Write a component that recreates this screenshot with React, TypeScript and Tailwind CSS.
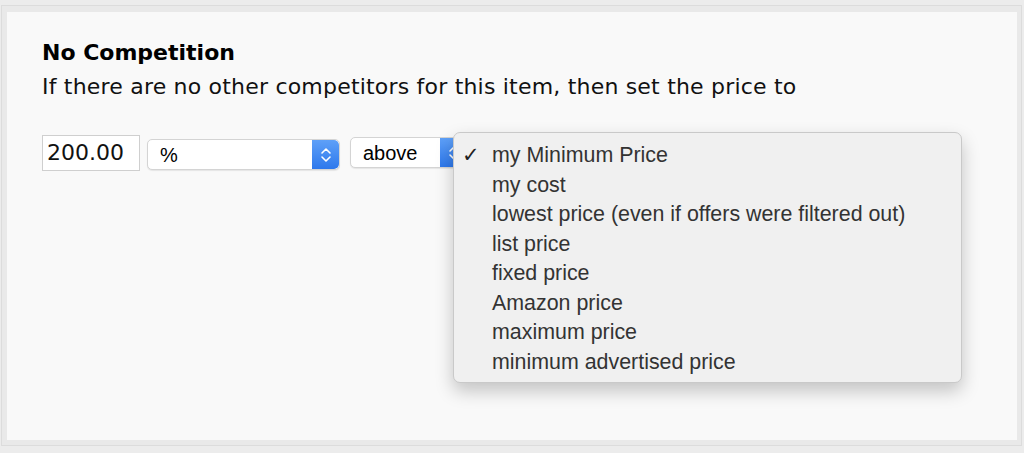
const options = [
  "my Minimum Price",
  "my cost",
  "lowest price (even if offers were filtered out)",
  "list price",
  "fixed price",
  "Amazon price",
  "maximum price",
  "minimum advertised price",
];

function Stepper() {
  return (
    <div className="flex h-full w-[27px] items-center justify-center rounded-r-[5px] bg-gradient-to-b from-[#5ea0f8] to-[#2d78ec]">
      <svg width="12" height="20" viewBox="0 0 12 20" fill="none">
        <path d="M2 8 L6 4 L10 8" stroke="white" strokeWidth="1.6" strokeLinecap="round" strokeLinejoin="round" />
        <path d="M2 12 L6 16 L10 12" stroke="white" strokeWidth="1.6" strokeLinecap="round" strokeLinejoin="round" />
      </svg>
    </div>
  );
}

export default function App() {
  return (
    <div className="h-[453px] w-[1024px] bg-[#ececec] pl-[1px] pr-[2px] pt-[5px] pb-[7px]">
      <div className="h-full border border-[#dcdcdc] bg-[#e9e9e9] pl-[5px] pr-[4px] pt-[6px] pb-[5px]">
        <div className="relative h-full bg-[#f9f9f9] pl-[35px] pt-[24px] font-['DejaVu_Sans',sans-serif] text-[22px] leading-[34px] text-[#111]">
          <div className="font-bold text-black">No Competition</div>
          <div className="tracking-[0.2px]">If there are no other competitors for this item, then set the price to</div>

          <div className="mt-[31px] flex items-start">
            <div className="flex h-[36px] w-[98px] items-center border border-[#cfcfcf] bg-white pl-[4px] text-[22px]">
              200.00
            </div>
            <div className="ml-[7px] mt-[4px] flex h-[31px] w-[193px] overflow-hidden rounded-[5px] border border-[#d4d4d4] bg-white shadow-[0_1px_1px_rgba(0,0,0,0.08)]">
              <div className="flex flex-1 items-center pl-[12px] font-['Liberation_Sans',sans-serif] text-[20px] text-black">%</div>
              <Stepper />
            </div>
            <div className="ml-[10px] mt-[2px] flex h-[31px] w-[118px] overflow-hidden rounded-[5px] border border-[#d4d4d4] bg-white shadow-[0_1px_1px_rgba(0,0,0,0.08)]">
              <div className="flex flex-1 items-center pl-[12px] font-['Liberation_Sans',sans-serif] text-[20px] text-black">above</div>
              <Stepper />
            </div>
          </div>

          <div className="absolute left-[446px] top-[120px] h-[251px] w-[509px] rounded-[7px] border border-[#c9c9c9] bg-[#f0f0f0] pt-[8px] font-['Liberation_Sans',sans-serif] text-[21.4px] text-[#333] shadow-[0_8px_18px_rgba(0,0,0,0.22)]">
            {options.map((o, i) => (
              <div key={o} className="flex h-[29.5px] items-center leading-[29.5px]">
                <span className="w-[38px] pl-[8px] font-['DejaVu_Sans',sans-serif] text-[21px] font-bold text-[#222]">
                  {i === 0 ? "✓" : ""}
                </span>
                <span>{o}</span>
              </div>
            ))}
          </div>
        </div>
      </div>
    </div>
  );
}
